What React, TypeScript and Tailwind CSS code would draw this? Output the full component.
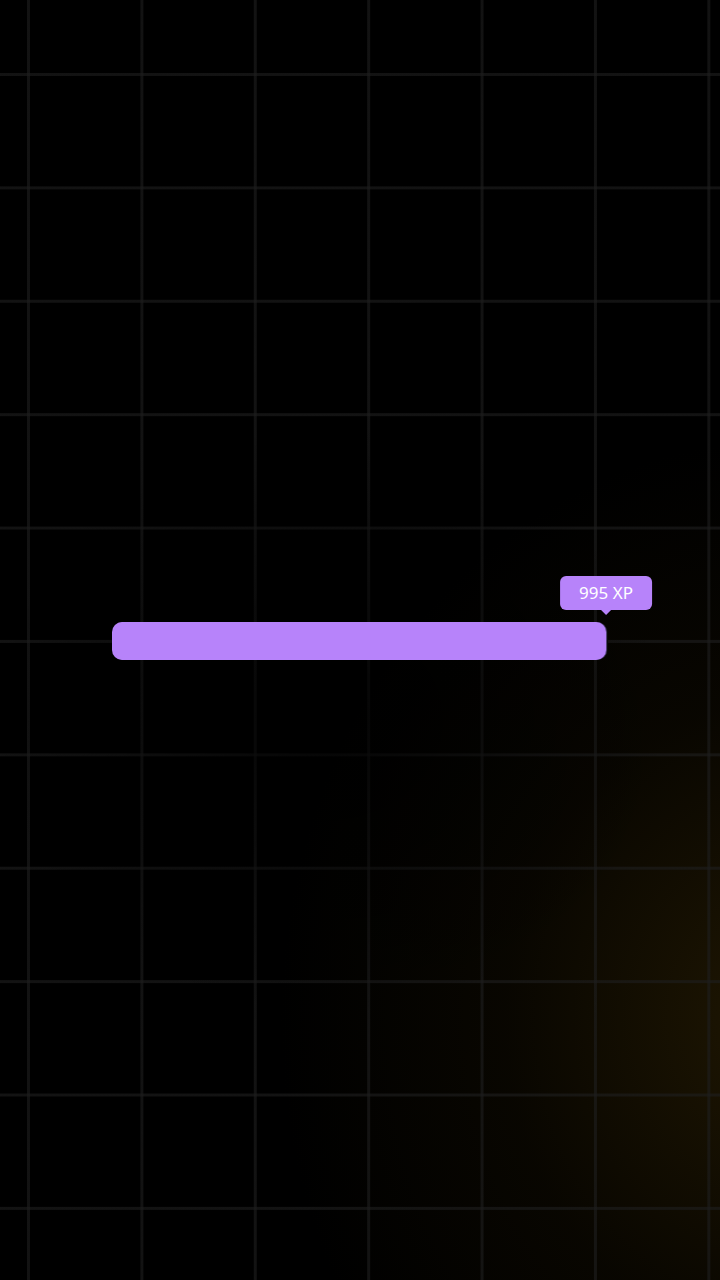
export default function App() {
  const pct = 99.6;
  return (
    <div className="relative h-[1280px] w-[720px] overflow-hidden bg-black font-['Noto_Sans',sans-serif]">
      <div
        aria-hidden
        className="pointer-events-none absolute inset-0 bg-[radial-gradient(ellipse_500px_580px_at_780px_1020px,rgba(52,38,4,0.6),rgba(28,20,2,0.3)_55%,transparent_100%)]"
      />
      <div
        aria-hidden
        className="pointer-events-none absolute inset-0 bg-[linear-gradient(to_right,rgba(30,30,30,0.62)_3px,transparent_3px),linear-gradient(to_bottom,rgba(30,30,30,0.62)_3px,transparent_3px)] bg-[size:113.4px_113.4px] bg-[position:27px_73px]"
      />
      <div
        aria-hidden
        className="pointer-events-none absolute inset-0 bg-[radial-gradient(ellipse_340px_300px_at_330px_720px,rgba(0,0,0,0.75),transparent_100%)]"
      />

      <div className="relative flex h-full items-center justify-center">
        <div className="relative mt-[2px] h-[38px] w-[496px] rounded-[10px] bg-[#0b0b0b]">
          <div
            className="h-full rounded-[10px] bg-[#b783fa] shadow-[1px_0_0_#55427a]"
            style={{ width: `${pct}%` }}
          />
          <div
            className="absolute -top-[46px] -translate-x-1/2"
            style={{ left: `${pct}%` }}
          >
            <div className="relative rounded-[6px] bg-[#b783fa] px-[19px] py-[5px] text-[17px] leading-[24px] text-white whitespace-nowrap">
              995 XP
              <span className="absolute left-1/2 top-full h-0 w-0 -translate-x-1/2 border-x-[5px] border-t-[5px] border-x-transparent border-t-[#b783fa]" />
            </div>
          </div>
        </div>
      </div>
    </div>
  );
}
